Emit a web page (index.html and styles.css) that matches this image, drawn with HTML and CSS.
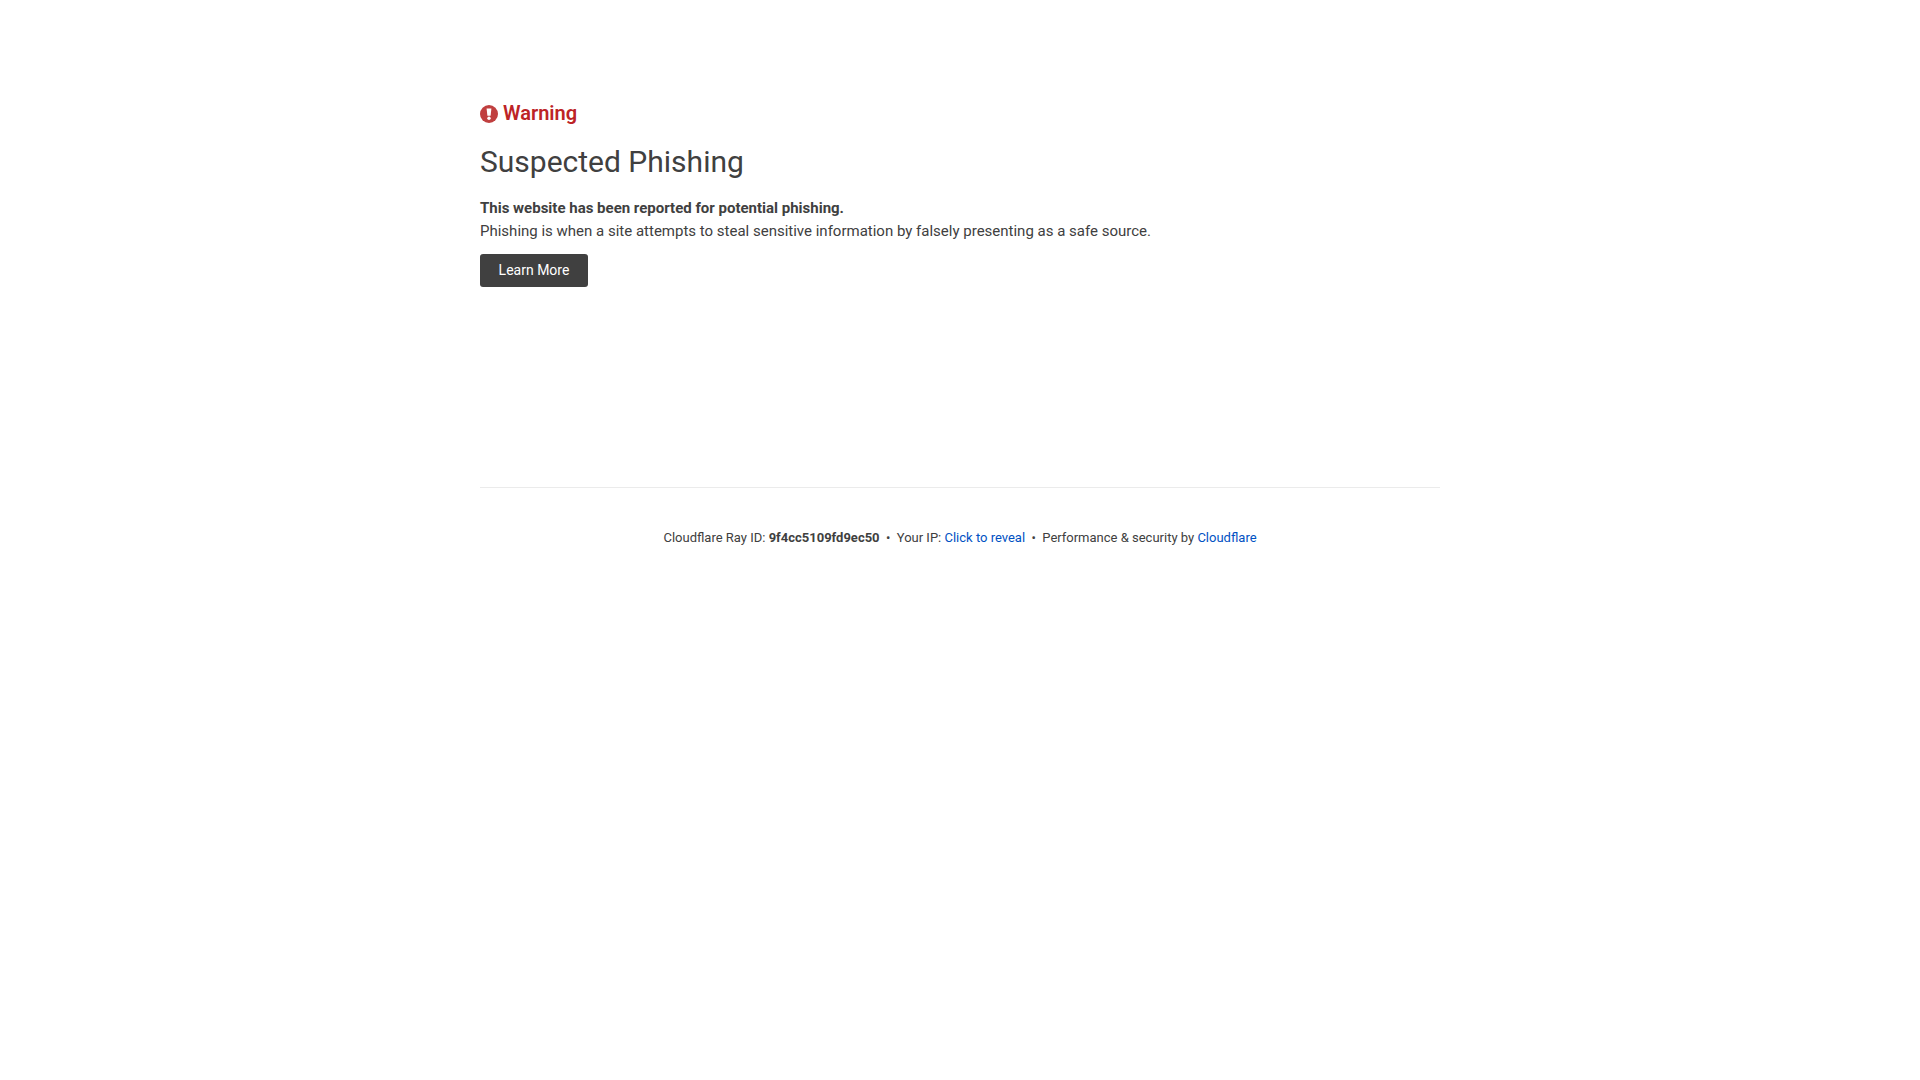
FILE: index.html
```html
<!DOCTYPE html>
<html lang="en-US">
<head>
  <meta charset="UTF-8">
  <title>Suspected phishing site | Cloudflare</title>
  <meta name="viewport" content="width=device-width, initial-scale=1.0">
  <link rel="stylesheet" href="styles.css">
</head>
<body>

  <div class="wrapper">
    <div class="warning">
      <svg class="warning-icon" viewBox="0 0 18 18" aria-hidden="true">
        <circle cx="9" cy="9" r="9" fill="#c03f3f"/>
        <path d="M6.6 3.4h4.8l-.8 7.4H7.4z" fill="#fff"/>
        <circle cx="9" cy="13.2" r="1.7" fill="#fff"/>
      </svg>
      <span>Warning</span>
    </div>

    <h1>Suspected Phishing</h1>

    <p class="reported">This website has been reported for potential phishing.</p>
    <p class="explain">Phishing is when a site attempts to steal sensitive information by falsely presenting as a safe source.</p>

    <button class="learn">Learn More</button>

    <div class="footer">
      <span>Cloudflare Ray ID: <strong>9f4cc5109fd9ec50</strong></span>
      <span class="sep">&bull;</span>
      <span>Your IP: <a href="#">Click to reveal</a></span>
      <span class="sep">&bull;</span>
      <span>Performance &amp; security by <a href="#">Cloudflare</a></span>
    </div>
  </div>

</body>
</html>
```

FILE: styles.css
```css
*{box-sizing:border-box;margin:0;padding:0}
body{
  font-family:Roboto,"Liberation Sans",sans-serif;font-size:15px;line-height:23px;
  background:#fff;color:#404040
}
.wrapper{width:960px;margin:0 auto;padding-top:100px}
.warning{
  display:flex;align-items:center;gap:5px;height:26px;
  font-size:20px;font-weight:600;color:#bd2426
}
.warning-icon{width:18px;height:18px;flex:none;margin-top:2px}
h1{margin-top:17px;font-size:30px;line-height:38px;font-weight:400;color:#404040}
.reported{margin-top:16px;font-weight:700}
.learn{
  display:block;margin-top:11px;width:108px;height:33px;padding-bottom:1px;
  font-family:inherit;font-size:14px;color:#fff;
  background:#404040;border:none;border-radius:3px
}
.footer{
  display:flex;justify-content:center;gap:6.4px;
  margin-top:200px;padding-top:40px;border-top:1px solid #ebebeb;
  font-size:13px;line-height:20px;color:#404040
}
.footer a{color:#0051c3;text-decoration:none}
.footer strong{font-weight:700}
```
